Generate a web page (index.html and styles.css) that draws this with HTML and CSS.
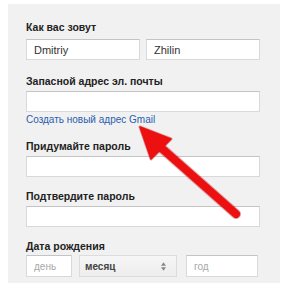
FILE: index.html
```html
<!doctype html>
<html lang="ru">
  <head>
    <meta charset="UTF-8" />
    <title>Создайте аккаунт Google</title>
    <link rel="stylesheet" href="styles.css">
  </head>
  <body>
    <div class="panel">
      <div class="field field-name">
        <label class="label">Как вас зовут</label>
        <div class="name-row">
          <input class="input" type="text" value="Dmitriy" />
          <input class="input" type="text" value="Zhilin" />
        </div>
      </div>

      <div class="field field-email">
        <label class="label">Запасной адрес эл. почты</label>
        <input class="input" type="text" />
        <a href="#" class="link">Создать новый адрес Gmail</a>
      </div>

      <div class="field field-pass">
        <label class="label">Придумайте пароль</label>
        <input class="input" type="password" />
      </div>

      <div class="field field-confirm">
        <label class="label">Подтвердите пароль</label>
        <input class="input" type="password" />
      </div>

      <div class="field field-birth">
        <label class="label">Дата рождения</label>
        <div class="date-row">
          <input class="input day" type="text" placeholder="день" />
          <div class="select">
            <span>месяц</span>
            <svg class="updown" viewBox="0 0 6 10" width="5" height="9">
              <path d="M0 4 L3 0 L6 4 Z M0 6 L3 10 L6 6 Z" fill="#888" />
            </svg>
          </div>
          <input class="input year" type="text" placeholder="год" />
        </div>
      </div>
    </div>

    <!-- red pointer over the form -->
    <svg class="arrow" viewBox="0 0 288 289" width="288" height="289">
      <line x1="236" y1="214" x2="158" y2="145" stroke="#b0000a" stroke-width="10" stroke-linecap="round" opacity="0.35" />
      <polygon points="140,127 171,139 151,159" fill="#b0000a" opacity="0.35" stroke="#b0000a" stroke-width="3" stroke-linejoin="round" />
      <line x1="236" y1="214" x2="158" y2="145" stroke="#ec1010" stroke-width="8" stroke-linecap="round" />
      <polygon points="140,127 171,139 151,159" fill="#ec1010" stroke="#ec1010" stroke-width="1.5" stroke-linejoin="round" />
    </svg>
  </body>
</html>
```

FILE: styles.css
```css
* {
  margin: 0;
  padding: 0;
  box-sizing: border-box;
}

body {
  font-family: "Liberation Sans", Arial, sans-serif;
  background: #ffffff;
  width: 288px;
  height: 289px;
  padding: 4px 8px 6px 8px;
  position: relative;
  overflow: hidden;
}

.panel {
  background: #f1f1f1;
  height: 279px;
  padding: 16px 20px 0 18px;
}

.field {
  display: flex;
  flex-direction: column;
}

.label {
  font-size: 10.5px;
  line-height: 14px;
  font-weight: bold;
  color: #222;
  margin-bottom: 3px;
}

.field-name .label {
  margin-bottom: 5px;
}

.input {
  height: 21px;
  width: 100%;
  background: #fff;
  border: 1px solid #d9d9d9;
  border-top-color: #c4c4c4;
  font-family: inherit;
  font-size: 11px;
  color: #333;
  padding: 0 7px;
  outline: none;
}

.input::placeholder {
  color: #a8a8a8;
  font-size: 10px;
}

.name-row {
  display: flex;
  gap: 6px;
}

.field-email {
  margin-top: 14px;
}

.link {
  font-size: 10px;
  line-height: 13px;
  color: #2a5db0;
  text-decoration: none;
  margin-top: 1px;
}

.field-pass {
  margin-top: 13px;
}

.field-confirm {
  margin-top: 12px;
}

.field-birth {
  margin-top: 12px;
}

.field-birth .label {
  margin-bottom: 2px;
}

.date-row {
  display: flex;
  height: 22px;
}

.date-row .input {
  height: 22px;
}

.day {
  width: 46px;
}

.select {
  width: 98px;
  margin-left: 7px;
  display: flex;
  align-items: center;
  justify-content: space-between;
  padding: 0 10px 0 5px;
  background: linear-gradient(#f6f6f6, #ededed);
  border: 1px solid #dcdcdc;
  font-size: 10px;
  font-weight: bold;
  color: #444;
}

.updown {
  display: block;
}

.year {
  width: 72px;
  margin-left: 9px;
}

.arrow {
  position: absolute;
  left: 0;
  top: 0;
  pointer-events: none;
}
```
